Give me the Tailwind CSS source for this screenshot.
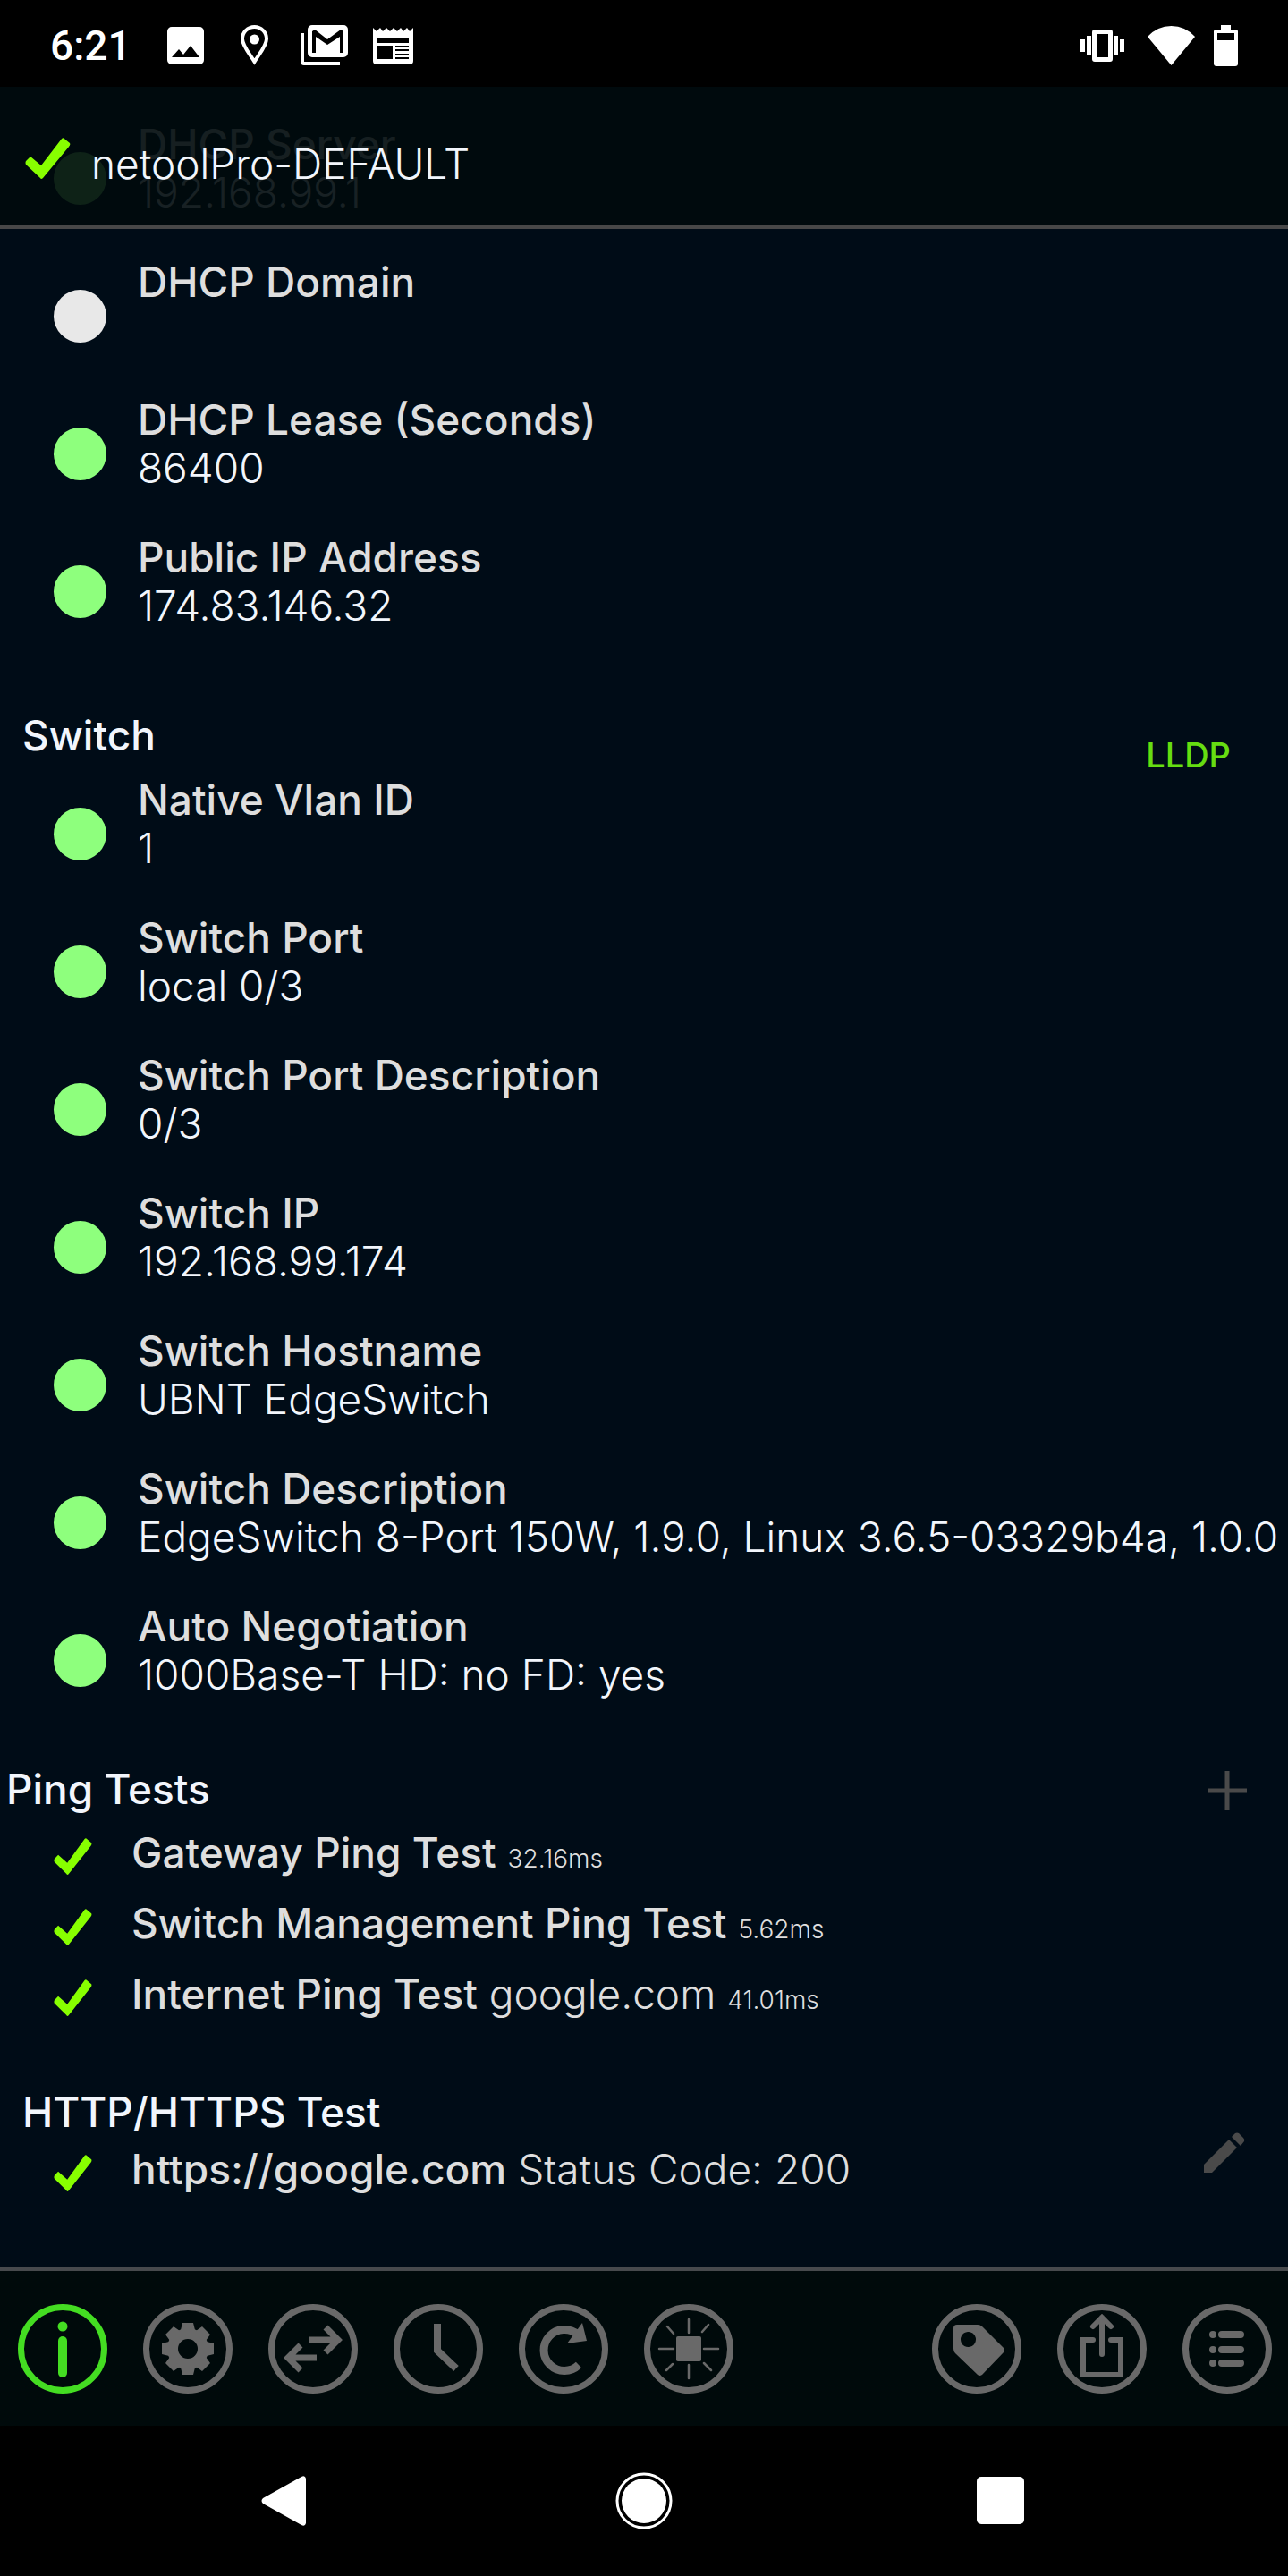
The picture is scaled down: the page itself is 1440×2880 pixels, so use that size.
<!DOCTYPE html>
<html lang="en">
<head>
    <meta charset="UTF-8">
    <meta name="viewport" content="width=device-width, initial-scale=1.0">
    <title>netoolPro</title>
    <!-- Tailwind CSS CDN -->
    <script src="https://cdn.jsdelivr.net/npm/@tailwindcss/browser@4"></script>
</head>
<body class="bg-black min-h-screen flex flex-col font-['Inter',sans-serif] text-[46px] leading-[54px] font-light text-[#f2f6fc]">

    <!-- Status bar -->
    <div class="h-[97px] shrink-0 bg-black text-white flex items-center justify-between pl-14 pr-14 pt-1">
        <div class="flex items-center">
            <span class="font-['Roboto',sans-serif] font-medium text-[46px] w-[131px]">6:21</span>
            <svg class="w-[41px] h-[42px] mr-[41px]" viewBox="0 0 41 42" fill="currentColor"><path fill-rule="evenodd" d="M5 0h31a5 5 0 0 1 5 5v32a5 5 0 0 1-5 5H5a5 5 0 0 1-5-5V5a5 5 0 0 1 5-5zM5 34h31L26 21l-8 10-5-6z"/></svg>
            <svg class="w-[31px] h-[45px] mr-9" viewBox="0 0 31 45" fill="none" stroke="currentColor" stroke-width="4"><path d="M15.500 41C10 32 2 23 2 15.500a13.500 13.500 0 0 1 27 0C29 23 21 32 15.500 41z"/><circle cx="15.500" cy="16" r="5.500" fill="currentColor" stroke="none"/></svg>
            <svg class="w-[53px] h-[45px] mr-7" viewBox="0 0 53 45" fill="currentColor"><path d="M0 9h4v32h40v4H4a4 4 0 0 1-4-4z"/><path fill-rule="evenodd" d="M13 0h35a5 5 0 0 1 5 5v26a5 5 0 0 1-5 5H13a5 5 0 0 1-5-5V5a5 5 0 0 1 5-5zM13 7v24h4V13l13 9 14-9v18h4V7l-3-2-15 11L16 5z"/></svg>
            <svg class="w-[45px] h-[42px]" viewBox="0 0 45 42" fill="currentColor"><path fill-rule="evenodd" d="M0 1l4 4 4-4 3 4 4-4 4 4 4-4 4 4 4-4 3 4 4-4 3 4 4-4v37a4 4 0 0 1-4 4H4a4 4 0 0 1-4-4zM5 12v6h35v-6zM5 21v15h17V21zM25 21v2h15v-2zM25 25v2h15v-2zM25 30v2h15v-2zM25 34v2h15v-2z"/></svg>
        </div>
        <div class="flex items-center">
            <svg class="w-[49px] h-[36px] mr-[26px]" viewBox="0 0 49 36" fill="currentColor"><path fill-rule="evenodd" d="M16 0h17a3 3 0 0 1 3 3v30a3 3 0 0 1-3 3H16a3 3 0 0 1-3-3V3a3 3 0 0 1 3-3zM18 5v26h13V5z"/><path d="M0 11h5v14H0zM7 7h5v22H7zM37 7h5v22h-5zM44 11h5v14h-5z"/></svg>
            <svg class="w-[53px] h-[44px] mr-[21px]" viewBox="0 0 53 44" fill="currentColor"><path d="M0 12Q11 0 26.500 0T53 12L26.500 44z"/></svg>
            <svg class="w-[27px] h-[46px]" viewBox="0 0 27 46" fill="currentColor"><path fill-rule="evenodd" d="M8 0h11v5h6a2 2 0 0 1 2 2v36a3 3 0 0 1-3 3H3a3 3 0 0 1-3-3V7a2 2 0 0 1 2-2h6zM4 9v8h19V9z"/></svg>
        </div>
    </div>

    <!-- Scroll area, the title bar lies over its first row -->
    <main class="relative grow bg-[#000c17] pt-[37px] pb-10">
        <header class="absolute inset-x-0 top-0 h-[159px] bg-[#000a0c]/90 border-b-4 border-[#474747] flex items-center pt-1 pl-7 gap-[23px]">
            <svg class="w-[51px] h-[46px]" viewBox="0 0 51 46" fill="#88ff00"><path d="M1 30Q0 28 1 26L6 21 18 31 41 1Q43-1 45 2L50 6Q51 8 49 10L20 45Q18 47 17 45z"/></svg>
            <h1 class="pt-3">netoolPro-DEFAULT</h1>
        </header>

        <ul id="dhcpList"></ul>

        <section class="pt-[45px]">
            <div class="flex justify-between pl-[25px] pr-16 mb-[18px] h-[54px]">
                <h2 class="font-medium">Switch</h2>
                <a href="#lldp" class="mt-[26px] text-[38px] leading-[46px] font-medium text-[#66dd11]">LLDP</a>
            </div>
            <ul id="switchList"></ul>
        </section>

        <section class="pt-7">
            <div class="flex items-center justify-between pl-[7px] pr-[46px] mb-[17px]">
                <h2 class="font-medium">Ping Tests</h2>
                <button type="button" aria-label="Add ping test" class="pt-1">
                    <svg class="w-[44px] h-[44px]" viewBox="0 0 44 44" stroke="#4a4a4a" stroke-width="5"><path d="M22 0v44M0 22h44"/></svg>
                </button>
            </div>
            <ul id="pingList" class="text-[#dedede] flex flex-col gap-[25px]"></ul>
        </section>

        <section class="pt-[78px] flex items-start justify-between pr-12">
            <div>
                <h2 class="font-medium pl-[25px] mb-2.5">HTTP/HTTPS Test</h2>
                <ul id="httpList" class="text-[#dedede]"></ul>
            </div>
            <button type="button" aria-label="Edit HTTP test" class="mt-[50px]">
                <svg class="w-[47px] h-[46px]" viewBox="0 0 47 46" fill="#4a4a4a"><path d="M1 36L29 8 38 17 10 45H1zM32 5l4-4q2-1 4 0l5 5q2 2 1 4l-4 5z"/></svg>
            </button>
        </section>
    </main>

    <!-- Toolbar -->
    <nav class="shrink-0 h-[177px] bg-[#000a0b] border-t-4 border-[#474a4d] pl-5 pr-[18px] flex items-center justify-between text-[#696969]">
        <div class="flex gap-10">
            <button type="button" aria-label="Info" class="text-[#44dd22]">
                <svg class="w-[100px] h-[100px]" viewBox="0 0 100 100" fill="none" stroke="currentColor" stroke-width="7"><circle cx="50" cy="50" r="46.500"/><circle cx="50" cy="25" r="5.500" fill="currentColor" stroke="none"/><path d="M50 41v36" stroke-width="10" stroke-linecap="round"/></svg>
            </button>
            <button type="button" aria-label="Settings">
                <svg class="w-[100px] h-[100px]" viewBox="0 0 100 100" fill="none" stroke="currentColor" stroke-width="7"><circle cx="50" cy="50" r="46.500"/><circle cx="50" cy="50" r="17" stroke-width="12"/><path stroke="none" fill="currentColor" d="M44 21h12l2 8H42zM44 79h12l2-8H42zM21 44v12l8 2V42zM79 44v12l-8 2V42zM25 34l9-9 7 5-11 11zM75 34l-9-9-7 5 11 11zM25 66l9 9 7-5-11-11zM75 66l-9 9-7-5 11-11z"/></svg>
            </button>
            <button type="button" aria-label="Transfer">
                <svg class="w-[100px] h-[100px]" viewBox="0 0 100 100" fill="none" stroke="currentColor" stroke-width="7"><circle cx="50" cy="50" r="46.500"/><path d="M46 40h31M64 26l14 14-14 14M54 60H23M36 46L22 60l14 14"/></svg>
            </button>
            <button type="button" aria-label="History">
                <svg class="w-[100px] h-[100px]" viewBox="0 0 100 100" fill="none" stroke="currentColor" stroke-width="7"><circle cx="50" cy="50" r="46.500"/><path d="M49 22v30l21 20" stroke-width="8"/></svg>
            </button>
            <button type="button" aria-label="Reload">
                <svg class="w-[100px] h-[100px]" viewBox="0 0 100 100" fill="none" stroke="currentColor" stroke-width="7"><circle cx="50" cy="50" r="46.500"/><path d="M67 68A23 23 0 1 1 66 34" stroke-width="9"/><path stroke="none" fill="currentColor" d="M71 21L76 41 54 44z"/></svg>
            </button>
            <button type="button" aria-label="Blink LED">
                <svg class="w-[100px] h-[100px]" viewBox="0 0 100 100" fill="none" stroke="currentColor" stroke-width="7"><circle cx="50" cy="50" r="46.500"/><rect x="36" y="36" width="28" height="28" rx="2" fill="currentColor" stroke="none"/><path stroke-width="2.500" stroke-linecap="round" d="M50 17v15M50 68v15M17 50h16M67 50h16M26 25l7 8M72 23l-7 8M25 74l7-7M75 74l-8-8"/></svg>
            </button>
        </div>
        <div class="flex gap-10">
            <button type="button" aria-label="Tags">
                <svg class="w-[100px] h-[100px]" viewBox="0 0 100 100" fill="none" stroke="currentColor" stroke-width="7"><circle cx="50" cy="50" r="46.500"/><path stroke="none" fill="currentColor" fill-rule="evenodd" d="M28 23H51Q54 23 56 25L80 49Q82 52 80 54L56 79Q53 81 51 79L26 55Q24 53 24 50V27Q24 23 28 23zM40 31a8.500 8.500 0 1 0 1 0z"/></svg>
            </button>
            <button type="button" aria-label="Share">
                <svg class="w-[100px] h-[100px]" viewBox="0 0 100 100" fill="none" stroke="currentColor" stroke-width="7"><circle cx="50" cy="50" r="46.500"/><path d="M40 40H29v39h42V40H60" stroke-width="6" stroke-linecap="round"/><path d="M50 56V15M40 25l10-10 10 10" stroke-width="6" stroke-linecap="round"/></svg>
            </button>
            <button type="button" aria-label="Menu">
                <svg class="w-[100px] h-[100px]" viewBox="0 0 100 100" fill="none" stroke="currentColor" stroke-width="7"><circle cx="50" cy="50" r="46.500"/><path d="M44 34h21M44 51h21M44 66h21M34 34h0M34 51h0M34 66h0" stroke-width="8" stroke-linecap="round"/></svg>
            </button>
        </div>
    </nav>

    <!-- Android navigation -->
    <div class="shrink-0 h-[168px] bg-black flex items-center justify-center gap-[336px]">
        <button type="button" aria-label="Back"><svg class="w-[64px] h-[64px]" viewBox="0 0 64 64" fill="#fff"><path d="M54 7v50q-1 4-5 2L6 35q-3-3 0-6L49 5q4-2 5 2z"/></svg></button>
        <button type="button" aria-label="Home"><svg class="w-[64px] h-[64px]" viewBox="0 0 64 64"><circle cx="32" cy="32" r="30" fill="none" stroke="#fff" stroke-width="3"/><circle cx="32" cy="32" r="25" fill="#fff"/></svg></button>
        <button type="button" aria-label="Recents"><svg class="w-[64px] h-[64px]" viewBox="0 0 64 64" fill="#fff"><rect x="4" y="5" width="53" height="53" rx="5"/></svg></button>
    </div>

    <script>
        const dhcp = [
            { name: 'DHCP Server', value: '192.168.99.1', ok: true },
            { name: 'DHCP Domain', value: '', ok: false },
            { name: 'DHCP Lease (Seconds)', value: '86400', ok: true },
            { name: 'Public IP Address', value: '174.83.146.32', ok: true },
        ];
        const switchInfo = [
            { name: 'Native Vlan ID', value: '1', ok: true },
            { name: 'Switch Port', value: 'local 0/3', ok: true },
            { name: 'Switch Port Description', value: '0/3', ok: true },
            { name: 'Switch IP', value: '192.168.99.174', ok: true },
            { name: 'Switch Hostname', value: 'UBNT EdgeSwitch', ok: true },
            { name: 'Switch Description', value: 'EdgeSwitch 8-Port 150W, 1.9.0, Linux 3.6.5-03329b4a, 1.0.0', ok: true },
            { name: 'Auto Negotiation', value: '1000Base-T HD: no FD: yes', ok: true },
        ];
        const pings = [
            { name: 'Gateway Ping Test', detail: '', time: '32.16ms' },
            { name: 'Switch Management Ping Test', detail: '', time: '5.62ms' },
            { name: 'Internet Ping Test', detail: 'google.com', time: '41.01ms' },
        ];
        const http = [
            { name: 'https://google.com', detail: 'Status Code: 200', time: '' },
        ];

        // Row with a status dot, a name and a value below it
        const infoRow = r => `
            <li class="flex h-[154px] pl-[60px] pr-3 gap-[35px]">
                <span class="mt-9 size-[59px] shrink-0 rounded-full ${r.ok ? 'bg-[#8eff7d]' : 'bg-[#e8e8e8]'}"></span>
                <div class="min-w-0 overflow-hidden whitespace-nowrap">
                    <p class="font-medium text-[#dedede]">${r.name}</p>
                    <p>${r.value}</p>
                </div>
            </li>`;

        // Row with a green tick for a passed test
        const testRow = r => `
            <li class="flex pl-[60px] gap-11 whitespace-nowrap">
                <svg class="mt-[11px] w-[43px] h-[41px] shrink-0" viewBox="0 0 51 46" preserveAspectRatio="none" fill="#88ff00"><path d="M1 30Q0 28 1 26L6 21 18 31 41 1Q43-1 45 2L50 6Q51 8 49 10L20 45Q18 47 17 45z"/></svg>
                <p><span class="font-medium">${r.name}</span>${r.detail ? ` ${r.detail}` : ''}${r.time ? ` <span class="text-[28px] leading-none">${r.time}</span>` : ''}</p>
            </li>`;

        document.getElementById('dhcpList').innerHTML = dhcp.map(infoRow).join('');
        document.getElementById('switchList').innerHTML = switchInfo.map(infoRow).join('');
        document.getElementById('pingList').innerHTML = pings.map(testRow).join('');
        document.getElementById('httpList').innerHTML = http.map(testRow).join('');
    </script>
</body>
</html>
